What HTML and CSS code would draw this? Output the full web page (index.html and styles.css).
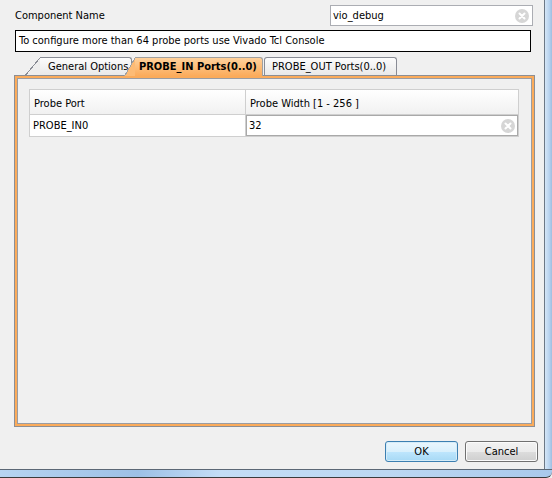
FILE: index.html
```html
<!DOCTYPE html>
<html lang="en">
<head>
    <meta charset="UTF-8">
    <title>Customize IP</title>
    <link rel="stylesheet" href="styles.css">
</head>
<body>
    <div class="window">
        <div class="dialog">
            <div class="name-row">
                <label class="name-label" for="compName">Component Name</label>
                <div class="text-field name-field">
                    <input type="text" id="compName" value="vio_debug">
                    <span class="clear-btn">
                        <svg width="14" height="14" viewBox="0 0 14 14">
                            <circle cx="7" cy="7" r="7" fill="#d6d6d6"/>
                            <path d="M4.5 4.5 L9.5 9.5 M9.5 4.5 L4.5 9.5" stroke="#fff" stroke-width="2" stroke-linecap="round"/>
                        </svg>
                    </span>
                </div>
            </div>
            <div class="info-box">To configure more than 64 probe ports use Vivado Tcl Console</div>

            <div class="tab-strip">
                <div class="tab tab-first">General Options</div>
                <div class="tab tab-active">PROBE_IN Ports(0..0)</div>
                <div class="tab tab-last">PROBE_OUT Ports(0..0)</div>
            </div>
            <div class="tab-panel">
                <div class="probe-table">
                    <div class="cell head">Probe Port</div>
                    <div class="cell head">Probe Width [1 - 256 ]</div>
                    <div class="cell">PROBE_IN0</div>
                    <div class="cell edit-cell">
                        <span>32</span>
                        <span class="clear-btn">
                            <svg width="14" height="14" viewBox="0 0 14 14">
                                <circle cx="7" cy="7" r="7" fill="#d6d6d6"/>
                                <path d="M4.5 4.5 L9.5 9.5 M9.5 4.5 L4.5 9.5" stroke="#fff" stroke-width="2" stroke-linecap="round"/>
                            </svg>
                        </span>
                    </div>
                </div>
            </div>

            <div class="button-row">
                <button class="btn btn-default">OK</button>
                <button class="btn">Cancel</button>
            </div>
        </div>
        <div class="frame-right"></div>
        <div class="frame-bottom"></div>
    </div>
</body>
</html>
```

FILE: styles.css
```css
/* Dialog styles */
body {
    margin: 0;
    padding: 0;
    background-color: #f0f0f0;
    font-family: 'DejaVu Sans Condensed', 'DejaVu Sans', sans-serif;
    font-size: 11px;
    color: #000;
}

.window {
    display: grid;
    grid-template-columns: 544px 8px;
    grid-template-rows: 469px 9px;
    width: 552px;
    height: 478px;
    overflow: hidden;
}

.dialog {
    display: flex;
    flex-direction: column;
    padding: 5px 10px 0 14px;
    background-color: #f0f0f0;
}

/* Component name row */
.name-row {
    display: flex;
    justify-content: space-between;
    align-items: center;
    height: 21px;
}

.name-label {
    margin-left: 1px;
}

.text-field {
    display: flex;
    align-items: center;
    box-sizing: border-box;
    background-color: #fff;
    border: 1px solid #abadb3;
}

.name-field {
    width: 203px;
    height: 21px;
    margin-right: 1px;
    padding: 0 3px 0 2px;
}

.name-field input {
    flex: 1;
    border: none;
    outline: none;
    padding: 0;
    font: inherit;
    background: transparent;
}

.clear-btn {
    display: flex;
}

.info-box {
    box-sizing: border-box;
    height: 22px;
    margin: 4px 3px 0 1px;
    padding: 3px 3px 0;
    background-color: #fff;
    border: 1px solid #000;
}

/* Tabs */
.tab-strip {
    display: flex;
    align-items: flex-end;
    height: 18px;
    margin-top: 5px;
    padding-left: 26px;
    position: relative;
    z-index: 1;
}

.tab {
    position: relative;
    box-sizing: border-box;
    height: 18px;
    padding: 2px 6px 0 6px;
    border: 1px solid #898c95;
    border-bottom: none;
    border-radius: 0 3px 0 0;
    background: linear-gradient(#fcfcfc, #e9e9e9);
    white-space: nowrap;
}

.tab-first,
.tab-active {
    border-left: none;
}

.tab-first::before,
.tab-active::before {
    content: "";
    position: absolute;
    top: -1px;
    bottom: 0;
    left: -15px;
    width: 15px;
    background: linear-gradient(to top left, #eeeeee calc(50% - 1px), #898c95 calc(50% - 1px), #898c95 50%, transparent 50%);
}

.tab-first {
    width: 92px;
    padding-left: 8px;
}

.tab-active {
    width: 128px;
    height: 19px;
    margin-bottom: -1px;
    margin-left: 3px;
    padding-left: 4px;
    font-weight: bold;
    background: linear-gradient(#ffd19b, #fbab5b);
    border-color: #a0a0a0;
}

.tab-active::before {
    left: -11px;
    width: 11px;
    background: linear-gradient(to top left, #fdbb75 calc(50% - 1px), #a0a0a0 calc(50% - 1px), #a0a0a0 50%, transparent 50%);
}

.tab-last {
    width: 133px;
    margin-left: 1px;
    border-radius: 3px 3px 0 0;
    padding-left: 7px;
}

/* Tab body with the orange frame */
.tab-panel {
    box-sizing: border-box;
    height: 350px;
    margin: 1px 0 0 1px;
    padding: 10px 13px 0 11px;
    border: 2px solid #fbab5a;
    box-shadow: 0 0 0 1px #8c8e94, inset 0 0 0 1px #9a9ca2;
    background-color: #f0f0f0;
}

.probe-table {
    display: grid;
    grid-template-columns: 215px 1fr;
    grid-template-rows: 24px 21px;
    margin: 1px 0 0 1px;
    border: 1px solid #cfcfcf;
    background-color: #cfcfcf;
    gap: 1px;
}

.cell {
    display: flex;
    align-items: center;
    padding-left: 3px;
    background-color: #fff;
}

.cell.head {
    padding-left: 4px;
    padding-top: 2px;
    background: linear-gradient(#ffffff, #f1f1f1);
}

.edit-cell {
    justify-content: space-between;
    padding-right: 3px;
    box-shadow: inset 0 0 0 1px #a9a9a9;
}

/* Buttons */
.button-row {
    display: flex;
    justify-content: flex-end;
    gap: 7px;
    margin: 15px -4px 0 0;
}

.btn {
    width: 73px;
    height: 21px;
    padding: 0;
    font: inherit;
    color: #000;
    border: 1px solid #707070;
    border-radius: 3px;
    background: linear-gradient(#f2f2f2 0%, #ebebeb 50%, #dddddd 51%, #cfcfcf 100%);
    box-shadow: inset 0 0 0 1px #fbfbfb;
}

.btn-default {
    border-color: #3c7fb1;
    background: linear-gradient(#eaf6fd 0%, #d9f0fc 50%, #bee6fd 51%, #a7d9f5 100%);
    box-shadow: inset 0 0 0 1px #d5ecf8;
}

/* Window frame */
.frame-right {
    border-left: 1px solid #6c7886;
    background: linear-gradient(90deg, #d5e6f7, #b8d3ef 60%, #9fbee0);
}

.frame-bottom {
    grid-column: 1 / 3;
    border-top: 1px solid #5b6775;
    border-bottom: 1px solid #3b3b3b;
    background: linear-gradient(90deg, #b7d4f1 0%, #9dc0e6 25%, #c4ddf6 40%, #bcd7f2 70%, #a9c9ec 100%);
    border-radius: 0 0 6px 0;
}
```
